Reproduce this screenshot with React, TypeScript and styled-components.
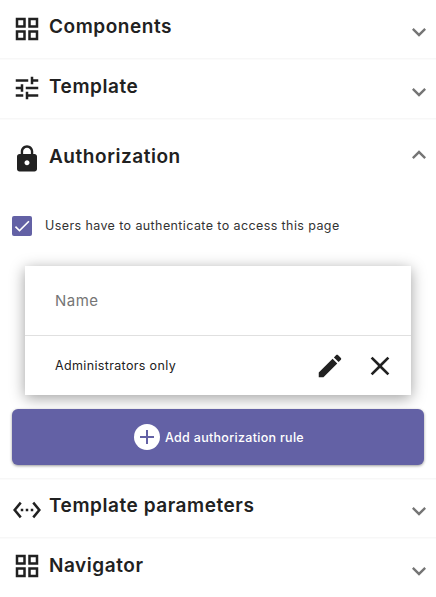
import React from "react";
import styled, { createGlobalStyle } from "styled-components";

const GlobalStyle = createGlobalStyle`
  html, body { margin: 0; padding: 0; background: #fff; }
  body { font-family: Inter, "Liberation Sans", sans-serif; color: #212121; }
`;

const icons = {
  grid: "M3 3v8h8V3H3zm6 6H5V5h4v4zm-6 4v8h8v-8H3zm6 6H5v-4h4v4zm4-16v8h8V3h-8zm6 6h-4V5h4v4zm-6 4v8h8v-8h-8zm6 6h-4v-4h4v4z",
  tune: "M3 17v2h6v-2H3zM3 5v2h10V5H3zm10 16v-2h8v-2h-8v-2h-2v6h2zM7 9v2H3v2h4v2h2V9H7zm14 4v-2H11v2h10zm-6-4h2V7h4V5h-4V3h-2v6z",
  lock: "M18 8h-1V6c0-2.76-2.24-5-5-5S7 3.24 7 6v2H6c-1.1 0-2 .9-2 2v10c0 1.1.9 2 2 2h12c1.1 0 2-.9 2-2V10c0-1.1-.9-2-2-2zm-6 9c-1.1 0-2-.9-2-2s.9-2 2-2 2 .9 2 2-.9 2-2 2zm3.1-9H8.9V6c0-1.71 1.39-3.1 3.1-3.1 1.71 0 3.1 1.39 3.1 3.1v2z",
  code: "M7.77 6.76L6.23 5.48.82 12l5.41 6.52 1.54-1.28L3.42 12l4.35-5.24zM7 13h2v-2H7v2zm10-2h-2v2h2v-2zm-6 2h2v-2h-2v2zm6.77-7.52l-1.54 1.28L20.58 12l-4.35 5.24 1.54 1.28L23.18 12l-5.41-6.52z",
  down: "M16.59 8.59L12 13.17 7.41 8.59 6 10l6 6 6-6z",
  up: "M12 8l-6 6 1.41 1.41L12 10.83l4.59 4.58L18 14z",
  edit: "M3 17.25V21h3.75L17.81 9.94l-3.75-3.75L3 17.25zM20.71 7.04c.39-.39.39-1.02 0-1.41l-2.34-2.34c-.39-.39-1.02-.39-1.41 0l-1.83 1.83 3.75 3.75 1.83-1.83z",
  close: "M19 6.41L17.59 5 12 10.59 6.41 5 5 6.41 10.59 12 5 17.59 6.41 19 12 13.41 17.59 19 19 17.59 13.41 12z",
  plus: "M19 13h-6v6h-2v-6H5v-2h6V5h2v6h6v2z",
  check: "M9 16.17L4.83 12l-1.42 1.41L9 19 21 7l-1.41-1.41z",
};

type IconName = keyof typeof icons;

const Icon = ({ name, size, color }: { name: IconName; size: number; color?: string }) => (
  <svg width={size} height={size} viewBox="0 0 24 24" fill={color || "#212121"} style={{ display: "block", flexShrink: 0 }}>
    <path d={icons[name]} />
  </svg>
);

const Page = styled.div`
  width: 436px;
  height: 597px;
  overflow: hidden;
  background: #fff;
`;

const Section = styled.section`
  border-bottom: 1px solid #f7f7f7;
  box-shadow: 0 1px 0 #fbfbfb;
  box-sizing: border-box;
`;

const Header = styled.div<{ $height: number; $iconTop: number; $titleTop: number; $arrowTop: number }>`
  height: ${(p) => p.$height}px;
  display: grid;
  grid-template-columns: 37px 1fr 28px;
  padding: 0 3px 0 12px;
  box-sizing: border-box;

  & > :nth-child(1) { margin-top: ${(p) => p.$iconTop}px; }
  & > :nth-child(2) { margin-top: ${(p) => p.$titleTop}px; }
  & > :nth-child(3) { margin-top: ${(p) => p.$arrowTop}px; }
`;

const Title = styled.h2`
  margin: 0;
  font-size: 19px;
  line-height: 26px;
  font-weight: 600;
  letter-spacing: 0.55px;
  color: #212121;
`;

const Body = styled.div`
  padding: 0 12px 13px;
`;

const CheckRow = styled.label`
  display: flex;
  align-items: center;
  gap: 13px;
  height: 20px;
  margin-top: 21px;
`;

const CheckBox = styled.span`
  width: 20px;
  height: 20px;
  border-radius: 2px;
  background: #6361a5;
  display: flex;
  align-items: center;
  justify-content: center;
`;

const CheckLabel = styled.span`
  font-size: 12.5px;
  letter-spacing: 0.4px;
  padding-bottom: 1px;
  color: #333;
`;

const RuleCard = styled.div`
  margin: 30px 13px 14px;
  background: #fff;
  box-shadow: 0 3px 14px rgba(0, 0, 0, 0.38);
`;

const NameCell = styled.div`
  height: 69px;
  padding: 0 30px;
  display: flex;
  align-items: center;
  font-size: 15px;
  letter-spacing: 0.5px;
  color: #757575;
  border-bottom: 1px solid #e0e0e0;
`;

const RuleRow = styled.div`
  height: 59px;
  padding: 0 15px 0 30px;
  display: flex;
  align-items: center;
  font-size: 12.5px;
  letter-spacing: 0.35px;
  color: #212121;
`;

const RuleName = styled.span`
  flex: 1;
`;

const IconButton = styled.span`
  width: 32px;
  height: 32px;
  margin-left: 18px;
  display: flex;
  align-items: center;
  justify-content: center;
`;

const AddButton = styled.div`
  height: 56px;
  padding-left: 2px;
  border-radius: 6px;
  background: #6361a5;
  box-shadow: 0 1px 3px rgba(0, 0, 0, 0.4);
  display: flex;
  align-items: center;
  justify-content: center;
  gap: 5px;
  color: #fff;
  font-size: 12.5px;
  letter-spacing: 0.3px;
  font-weight: 500;
`;

const PlusCircle = styled.span`
  width: 26px;
  height: 26px;
  border-radius: 50%;
  background: #fff;
  display: flex;
  align-items: center;
  justify-content: center;
`;

export default function App() {
  return (
    <Page>
      <GlobalStyle />
      <Section>
        <Header $height={58} $iconTop={14} $titleTop={14} $arrowTop={18}>
          <Icon name="grid" size={30} />
          <Title>Components</Title>
          <Icon name="down" size={28} color="#757575" />
        </Header>
      </Section>
      <Section>
        <Header $height={59} $iconTop={14} $titleTop={15} $arrowTop={19}>
          <Icon name="tune" size={30} />
          <Title>Template</Title>
          <Icon name="down" size={28} color="#757575" />
        </Header>
      </Section>
      <Section>
        <Header $height={76} $iconTop={25} $titleTop={25} $arrowTop={22}>
          <Icon name="lock" size={30} />
          <Title>Authorization</Title>
          <Icon name="up" size={28} color="#757575" />
        </Header>
        <Body>
          <CheckRow>
            <CheckBox>
              <Icon name="check" size={20} color="#fff" />
            </CheckBox>
            <CheckLabel>Users have to authenticate to access this page</CheckLabel>
          </CheckRow>
          <RuleCard>
            <NameCell>Name</NameCell>
            <RuleRow>
              <RuleName>Administrators only</RuleName>
              <IconButton><Icon name="edit" size={30} /></IconButton>
              <IconButton><Icon name="close" size={32} /></IconButton>
            </RuleRow>
          </RuleCard>
          <AddButton>
            <PlusCircle><Icon name="plus" size={24} color="#6361a5" /></PlusCircle>
            Add authorization rule
          </AddButton>
        </Body>
      </Section>
      <Section>
        <Header $height={58} $iconTop={16} $titleTop={14} $arrowTop={18}>
          <Icon name="code" size={30} />
          <Title>Template parameters</Title>
          <Icon name="down" size={28} color="#757575" />
        </Header>
      </Section>
      <Section>
        <Header $height={60} $iconTop={13} $titleTop={15} $arrowTop={19}>
          <Icon name="grid" size={30} />
          <Title>Navigator</Title>
          <Icon name="down" size={28} color="#757575" />
        </Header>
      </Section>
    </Page>
  );
}
